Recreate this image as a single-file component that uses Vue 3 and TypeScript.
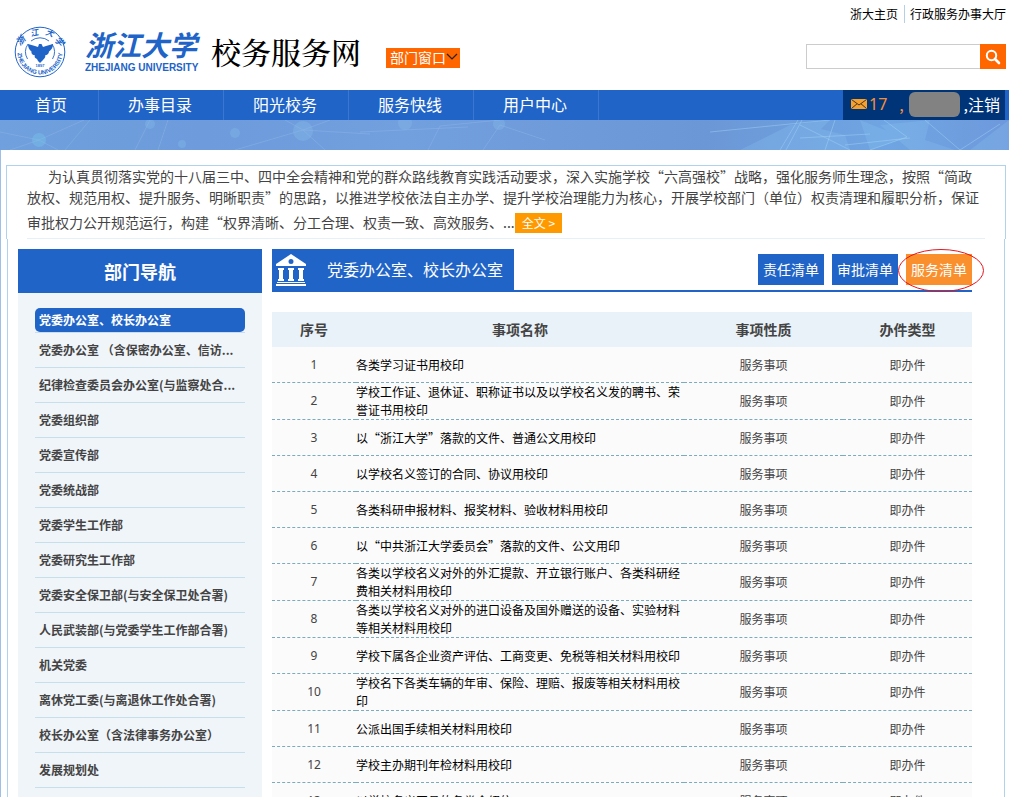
<script setup lang="ts">
import { ref } from 'vue'

interface Service {
  id: number
  name: string
}

const navItems: string[] = ['首页', '办事目录', '阳光校务', '服务快线', '用户中心']

const departments: string[] = [
  '党委办公室、校长办公室',
  '党委办公室 （含保密办公室、信访...',
  '纪律检查委员会办公室(与监察处合...',
  '党委组织部',
  '党委宣传部',
  '党委统战部',
  '党委学生工作部',
  '党委研究生工作部',
  '党委安全保卫部(与安全保卫处合署)',
  '人民武装部(与党委学生工作部合署)',
  '机关党委',
  '离休党工委(与离退休工作处合署)',
  '校长办公室（含法律事务办公室）',
  '发展规划处',
]
const activeDepartment = ref(0)

const tabs: string[] = ['责任清单', '审批清单', '服务清单']
const activeTab = ref(2)
const keyword = ref('')

const services: Service[] = [
  '各类学习证书用校印',
  '学校工作证、退休证、职称证书以及以学校名义发的聘书、荣誉证书用校印',
  '以“浙江大学”落款的文件、普通公文用校印',
  '以学校名义签订的合同、协议用校印',
  '各类科研申报材料、报奖材料、验收材料用校印',
  '以“中共浙江大学委员会”落款的文件、公文用印',
  '各类以学校名义对外的外汇提款、开立银行账户、各类科研经费相关材料用校印',
  '各类以学校名义对外的进口设备及国外赠送的设备、实验材料等相关材料用校印',
  '学校下属各企业资产评估、工商变更、免税等相关材料用校印',
  '学校名下各类车辆的年审、保险、理赔、报废等相关材料用校印',
  '公派出国手续相关材料用校印',
  '学校主办期刊年检材料用校印',
  '以学校名义开具的各类介绍信',
].map((name, i) => ({ id: i + 1, name }))
</script>

<template>
  <div class="page" lang="zh-CN">
    <header class="header">
      <a class="brand" href="#">
        <svg class="emblem" viewBox="0 0 52 52" aria-hidden="true">
          <defs>
            <path id="arc-low" d="M3.500 26 A22.500 22.500 0 0 0 48.500 26" />
          </defs>
          <circle cx="26" cy="26" r="24.800" fill="none" stroke="#2064c8" stroke-width="1" />
          <path d="M13.500 33 A14.200 14.200 0 0 1 14 18 M17 15 A14.200 14.200 0 0 1 35 15 M38 18 A14.200 14.200 0 0 1 38.500 33" fill="none" stroke="#2064c8" stroke-width="0.900" />
          <path fill="#2064c8" d="M14 18 L21 20 L24 21 L25 18 L27.500 18 L29 21 L32 20 L39 18 C39 22 37 24 35 25.500 C35 28 33 29 31 29.500 C32 31 30 33 29 34 L28 35 L26 37 L24 35 L23 33 C21 32 20 31 21 29.500 C19 29 17 28 17.500 25.500 C15 24 14 21 14 18 Z" />
          <g fill="#2064c8" font-weight="700">
            <text font-size="9" font-style="italic" transform="translate(6 20) rotate(-48)">浙</text>
            <text font-size="8" font-style="italic" transform="translate(17 10.500) rotate(-12)">江</text>
            <text font-size="8" font-style="italic" transform="translate(31 8.500) rotate(18)">大</text>
            <text font-size="9" font-style="italic" transform="translate(40 14) rotate(50)">学</text>
            <text class="latin" font-size="4" x="26" y="41" text-anchor="middle">1897</text>
            <text class="latin" font-size="6"><textPath href="#arc-low" startOffset="50%" text-anchor="middle">ZHEJIANG UNIVERSITY</textPath></text>
          </g>
        </svg>
        <span class="wordmark">
          <span class="wordmark-cn">浙江大学</span>
          <span class="wordmark-en">ZHEJIANG UNIVERSITY</span>
        </span>
        <span class="site-title">校务服务网</span>
      </a>
      <button class="dept-button" type="button">
        部门窗口
        <svg viewBox="0 0 12 8" width="12" height="8" aria-hidden="true"><path d="M1 1 L6 6 L11 1" fill="none" stroke="#222" stroke-width="1.200" /></svg>
      </button>
      <div class="tools">
        <div class="top-links">
          <a href="#">浙大主页</a>
          <a href="#">行政服务办事大厅</a>
        </div>
        <form class="search" @submit.prevent>
          <input v-model="keyword" type="text" aria-label="搜索" />
          <button type="submit" aria-label="搜索">
            <svg viewBox="0 0 16 16" width="16" height="16" aria-hidden="true">
              <circle cx="6.500" cy="6.500" r="4.700" fill="none" stroke="#fff" stroke-width="2" />
              <path d="M10 10 L14 14" stroke="#fff" stroke-width="2.600" stroke-linecap="round" />
            </svg>
          </button>
        </form>
      </div>
    </header>

    <nav class="nav">
      <a v-for="item in navItems" :key="item" href="#">{{ item }}</a>
      <div class="user">
        <a class="mail" href="#">
          <svg viewBox="0 0 16 10" width="16" height="10" aria-hidden="true">
            <rect width="16" height="10" rx="1" fill="#f7a02c" />
            <path d="M0.500 0.500 L8 6 L15.500 0.500 M0.500 9.500 L6 4.800 M15.500 9.500 L10 4.800" fill="none" stroke="#43362a" stroke-width="1" />
          </svg>
          <span>17</span>
        </a>
        <span class="comma">,</span>
        <span class="user-name"></span>
        <a class="logout" href="#">,注销</a>
      </div>
    </nav>

    <svg class="banner" viewBox="0 0 1009 30" preserveAspectRatio="none" aria-hidden="true">
      <defs>
        <linearGradient id="sky" x1="0" x2="1" y1="0" y2="0">
          <stop offset="0" stop-color="#70a0de" />
          <stop offset="0.200" stop-color="#6d9bdb" />
          <stop offset="0.400" stop-color="#729fde" />
          <stop offset="0.700" stop-color="#6c97d7" />
          <stop offset="0.880" stop-color="#6fa5e2" />
          <stop offset="1" stop-color="#6e99dc" />
        </linearGradient>
      </defs>
      <rect width="1009" height="30" fill="url(#sky)" />
      <g fill="none" stroke="#8db5e8" stroke-width="0.800" opacity="0.600">
        <path d="M0 12 L39 20 L84 0 M39 20 L58 30 M39 20 L10 30 M65 30 L90 0 M150 0 L135 30 M168 0 L158 30 M235 30 L303 10 L330 0 M303 10 L325 30 M303 10 L285 0 M303 10 L370 14 M360 12 L468 7 M428 30 L440 6 L500 0 M483 30 L500 5 L545 20" />
      </g>
      <g fill="#86b9e8" opacity="0.400">
        <circle cx="39" cy="20" r="7" fill="#78c6ea" />
        <circle cx="150" cy="4" r="5" />
        <circle cx="182" cy="24" r="4" />
        <circle cx="235" cy="13" r="5" />
        <circle cx="303" cy="11" r="10" />
        <circle cx="405" cy="3" r="7" />
        <circle cx="499" cy="4" r="6" />
      </g>
      <g fill="#91c7f2" opacity="0.250">
        <path d="M740 30 L790 5 L830 0 L800 30 Z M805 5 L845 15 L850 30 L800 30 Z M860 0 L905 18 L870 30 Z M880 5 L930 0 L925 20 L955 30 L910 30 Z M970 30 L1009 0 V30 Z" />
      </g>
      <g fill="none" stroke="#a5d4f7" stroke-width="1" opacity="0.450">
        <path d="M710 12 L770 6 L830 0 M780 30 L798 0 M786 30 L802 0 M800 5 L850 30 M825 30 L835 0 M800 18 L870 14 M884 0 L907 17 L870 30 M925 0 L960 30 L1000 4 M845 25 L910 18" />
      </g>
    </svg>

    <div class="body">
      <section class="intro">
        <p>为认真贯彻落实党的十八届三中、四中全会精神和党的群众路线教育实践活动要求，深入实施学校“六高强校”战略，强化服务师生理念，按照“简政放权、规范用权、提升服务、明晰职责”的思路，以推进学校依法自主办学、提升学校治理能力为核心，开展学校部门（单位）权责清理和履职分析，保证审批权力公开规范运行，构建“权界清晰、分工合理、权责一致、高效服务、...<a class="more" href="#">全文 &gt;</a></p>
      </section>

      <div class="columns">
        <aside class="sidebar">
          <h2>部门导航</h2>
          <ul>
            <li v-for="(dept, i) in departments" :key="dept" :class="{ active: i === activeDepartment }">
              <a href="#" @click.prevent="activeDepartment = i">{{ dept }}</a>
            </li>
          </ul>
        </aside>

        <main class="main">
          <div class="main-head">
            <h1>
              <svg viewBox="0 0 32 32" width="32" height="32" aria-hidden="true">
                <path fill="#fff" fill-rule="evenodd" d="M16 0 L31 10 V12 H1 V10 Z M16 5 A2.500 2.500 0 1 0 16 10 A2.500 2.500 0 1 0 16 5 Z" />
                <path fill="#fff" d="M3 14 H9 V16 H8 V25 H9 V27 H3 V25 H4 V16 H3 Z M13 14 H19 V16 H18 V25 H19 V27 H13 V25 H14 V16 H13 Z M23 14 H29 V16 H28 V25 H29 V27 H23 V25 H24 V16 H23 Z M2 28 H30 V29 H2 Z M1 30 H31 V32 H1 Z" />
              </svg>
              <span>党委办公室、校长办公室</span>
            </h1>
            <div class="tabs">
              <button v-for="(tab, i) in tabs" :key="tab" type="button" :class="{ active: i === activeTab }" @click="activeTab = i">
                {{ tab }}
                <svg v-if="i === 2" class="ring" viewBox="0 0 86 43" aria-hidden="true">
                  <ellipse cx="43" cy="21.500" rx="42.500" ry="21" fill="none" stroke="#e8141c" stroke-width="1" />
                </svg>
              </button>
            </div>
          </div>

          <table>
            <colgroup>
              <col class="col-id" />
              <col />
              <col class="col-kind" />
              <col class="col-type" />
            </colgroup>
            <thead>
              <tr>
                <th>序号</th>
                <th>事项名称</th>
                <th>事项性质</th>
                <th>办件类型</th>
              </tr>
            </thead>
            <tbody>
              <tr v-for="service in services" :key="service.id">
                <td class="num">{{ service.id }}</td>
                <td class="name"><a href="#">{{ service.name }}</a></td>
                <td>服务事项</td>
                <td>即办件</td>
              </tr>
            </tbody>
          </table>
        </main>
      </div>
    </div>
  </div>
</template>

<style>
body {
  margin: 0;
  background: #fff;
}
</style>

<style scoped>
.page {
  display: flex;
  flex-direction: column;
  height: 100vh;
  overflow: hidden;
  box-sizing: border-box;
  padding-right: 1px;
  font-family: "Noto Sans CJK SC", "Noto Sans", sans-serif;
  font-size: 12px;
  color: #444;
  text-spacing-trim: space-all;
}
.page * {
  box-sizing: border-box;
}
a {
  color: inherit;
  text-decoration: none;
}
button {
  font-family: inherit;
  border: 0;
  padding: 0;
  cursor: pointer;
}
.header {
  flex: none;
  display: flex;
  height: 90px;
  padding: 0 3px 0 14px;
}
.brand {
  display: flex;
  align-items: center;
  padding-top: 14px;
}
.emblem {
  width: 52px;
  height: 52px;
}
.latin {
  font-family: "Liberation Sans", sans-serif;
}
.wordmark {
  display: flex;
  flex-direction: column;
  width: 116px;
  margin-left: 19px;
  padding-bottom: 4px;
  color: #2064c8;
  font-weight: 700;
  white-space: nowrap;
}
.wordmark-cn {
  font-size: 28px;
  line-height: 36px;
  font-style: italic;
}
.wordmark-en {
  font-family: "Liberation Sans", sans-serif;
  font-size: 10px;
  line-height: 12px;
}
.site-title {
  margin-left: 10px;
  padding-top: 4px;
  font-family: "Liberation Serif", "Noto Serif CJK SC", "Noto Sans CJK SC", serif;
  font-size: 30px;
  font-weight: 500;
  line-height: 40px;
  color: #000;
}
.dept-button {
  display: flex;
  align-items: center;
  align-self: flex-start;
  height: 20px;
  margin: 48px 0 0 25px;
  padding: 0 2px 2px 4px;
  background: #ff6600;
  color: #fff;
  font-size: 14px;
  line-height: 20px;
}
.tools {
  margin-left: auto;
}
.top-links {
  display: flex;
  justify-content: flex-end;
  padding-top: 5px;
  color: #000;
  line-height: 18px;
}
.top-links a + a {
  margin-left: 6px;
  padding-left: 5px;
  border-left: 1px solid #b5cfe8;
}
.search {
  display: flex;
  height: 25px;
  margin-top: 21px;
}
.search input {
  width: 174px;
  border: 1px solid #ccc;
  border-right: 0;
  padding: 0 6px;
  font: inherit;
  outline: none;
}
.search button {
  display: grid;
  place-items: center;
  width: 26px;
  background: #ff6600;
}
.nav {
  flex: none;
  display: flex;
  height: 30px;
  padding-right: 4px;
  background: #2064c8;
  color: #fff;
  font-size: 16px;
  line-height: 28px;
}
.nav > a {
  width: 125px;
  padding-right: 2px;
  border-right: 1px solid #3a77d0;
  text-align: center;
}
.nav > a:first-child {
  width: 99px;
  padding-left: 6px;
}
.user {
  display: flex;
  align-items: center;
  width: 162px;
  margin-left: auto;
  padding: 0 5px 2px 8px;
  background: #003478;
}
.mail {
  display: flex;
  align-items: center;
  gap: 2px;
  font-family: "Noto Sans", sans-serif;
}
.mail,
.comma {
  color: #f58f3c;
}
.comma {
  margin-left: 12px;
}
.user-name {
  width: 51px;
  height: 25px;
  margin-left: auto;
  border-radius: 6px;
  background: #828282;
}
.logout {
  margin-left: 4px;
}
.banner {
  flex: none;
  display: block;
  width: 100%;
  height: 30px;
}
.body {
  flex: 1;
  min-height: 0;
  padding: 15px 3px 0 5px;
  border-left: 1px solid #9fbfea;
}
.intro {
  padding: 0 20px;
  border: 1px solid #afd3ec;
  border-bottom: 0;
}
.intro p {
  margin: 0;
  padding-bottom: 5px;
  border-bottom: 1px solid #e6f0f8;
  font-size: 14px;
  line-height: 21px;
  text-indent: 21px;
}
.more {
  display: inline-block;
  height: 20px;
  margin-top: 5px;
  padding: 0 7px;
  background: #ff9900;
  color: #fff;
  font-size: 12px;
  line-height: 20px;
  text-indent: 0;
}
.columns {
  display: flex;
  gap: 10px;
  margin: 0 1px;
  padding: 10px 32px 0 10px;
  border: solid #afd3ec;
  border-width: 0 1px;
}
.sidebar {
  flex: none;
  width: 244px;
  background: #f0f5fa;
}
.sidebar h2 {
  margin: 0;
  background: #2064c8;
  color: #fff;
  font-size: 18px;
  line-height: 44px;
  text-align: center;
}
.sidebar ul {
  margin: 0;
  padding: 15px 17px;
  list-style: none;
}
.sidebar li {
  border-bottom: 1px solid #c6dfea;
  font-weight: 700;
  line-height: 34px;
  white-space: nowrap;
}
.sidebar a {
  display: block;
  padding-left: 4px;
}
.sidebar .active a {
  border-radius: 5px;
  background: #2064c8;
  color: #fff;
  line-height: 24px;
}
.main {
  flex: 1;
  min-width: 0;
}
.main-head {
  display: flex;
  justify-content: space-between;
  height: 43px;
  border-bottom: 2px solid #2064c8;
}
.main-head h1 {
  display: flex;
  align-items: center;
  gap: 20px;
  margin: 0;
  padding: 0 11px 0 3px;
  background: #2064c8;
  color: #fff;
  font-size: 16px;
  font-weight: 400;
}
.main-head h1 span {
  padding-bottom: 2px;
}
.tabs {
  display: flex;
  align-items: center;
  gap: 8px;
}
.tabs button {
  position: relative;
  width: 66px;
  height: 31px;
  padding-bottom: 2px;
  background: #2064c8;
  color: #fff;
  font-size: 14px;
}
.tabs .active {
  background: #f98f2d;
}
.ring {
  position: absolute;
  left: -8px;
  top: -5px;
  width: 86px;
  height: 43px;
}
table {
  width: 100%;
  margin-top: 20px;
  table-layout: fixed;
  border-collapse: separate;
  border-spacing: 0;
}
.col-id {
  width: 84px;
}
.col-kind {
  width: 159px;
}
.col-type {
  width: 129px;
}
th {
  height: 35px;
  padding: 0 0 2px;
  background: #e9f2f9;
  font-size: 14px;
}
td {
  height: 36px;
  padding: 0;
  border-bottom: 1px dashed #7bacbd;
  background: #fbfbfb;
  line-height: 18px;
  text-align: center;
}
td.num {
  font-family: "Noto Sans", sans-serif;
}
td.name {
  color: #000;
  text-align: left;
}
</style>
